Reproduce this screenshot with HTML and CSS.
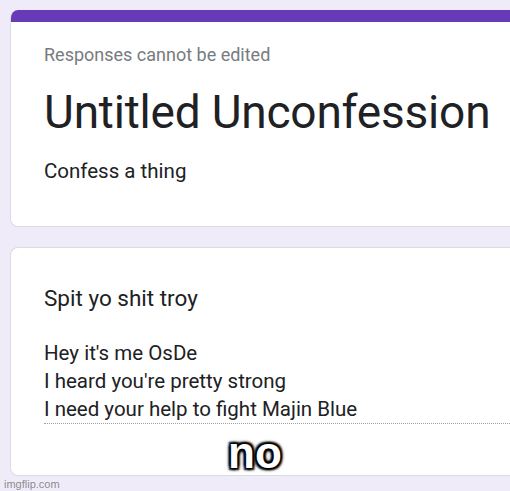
FILE: index.html
```html
<!DOCTYPE html>
<html>
<head>
<meta charset="utf-8">
<link rel="stylesheet" href="styles.css">
</head>
<body>
<div class="page">
  <div class="card header-card">
    <div class="accent"></div>
    <div class="header-body">
      <div class="note">Responses cannot be edited</div>
      <div class="title">Untitled Unconfession</div>
      <div class="desc">Confess a thing</div>
    </div>
  </div>
  <div class="card question-card">
    <div class="question">Spit yo shit troy</div>
    <div class="answer">
      <div class="answer-line">Hey it's me OsDe</div>
      <div class="answer-line">I heard you're pretty strong</div>
      <div class="answer-line">I need your help to fight Majin Blue</div>
    </div>
  </div>
</div>
<div class="caption">no</div>
<div class="watermark">imgflip.com</div>
</body>
</html>
```

FILE: styles.css
```css
html, body {
  margin: 0;
  padding: 0;
  width: 510px;
  height: 491px;
  overflow: hidden;
}
body {
  background: #f0ebf8;
  font-family: Roboto, "Liberation Sans", sans-serif;
  color: #202124;
  position: relative;
}
.page {
  padding: 10px 0 0 10px;
  display: flex;
  flex-direction: column;
  gap: 20px;
}
.card {
  width: 500px;
  background: #ffffff;
  border: 1px solid #dadce0;
  border-right: none;
  border-radius: 8px 0 0 8px;
  box-sizing: border-box;
  overflow: hidden;
}
.header-card {
  height: 217px;
  border-top: none;
}
.accent {
  height: 12px;
  background: #673ab7;
}
.header-body {
  padding: 21px 0 0 33px;
}
.note {
  font-size: 18px;
  line-height: 24px;
  color: #777b80;
}
.title {
  font-size: 46px;
  line-height: 56px;
  margin-top: 17px;
  letter-spacing: -0.2px;
}
.desc {
  font-size: 20.5px;
  line-height: 28px;
  margin-top: 17px;
}
.question-card {
  height: 229px;
  padding: 36px 0 0 33px;
}
.question {
  font-size: 22.5px;
  line-height: 28px;
}
.answer {
  margin-top: 27px;
  border-bottom: 1px dotted #9aa0a6;
}
.answer-line {
  font-size: 20.5px;
  line-height: 28px;
}
.caption {
  position: absolute;
  left: 0;
  right: 0;
  top: 428px;
  text-align: center;
  font-family: "Liberation Sans", Arial, sans-serif;
  font-weight: bold;
  font-size: 44px;
  line-height: 50px;
  color: #ffffff;
  text-shadow: 2px 2px 2px #000, -2px -2px 2px #000, 2px -2px 2px #000, -2px 2px 2px #000, 0 0 5px #000;
}
.watermark {
  position: absolute;
  left: 4px;
  top: 477px;
  font-family: "Liberation Sans", Arial, sans-serif;
  font-size: 11px;
  line-height: 14px;
  color: rgba(120, 120, 120, 0.85);
}
```
